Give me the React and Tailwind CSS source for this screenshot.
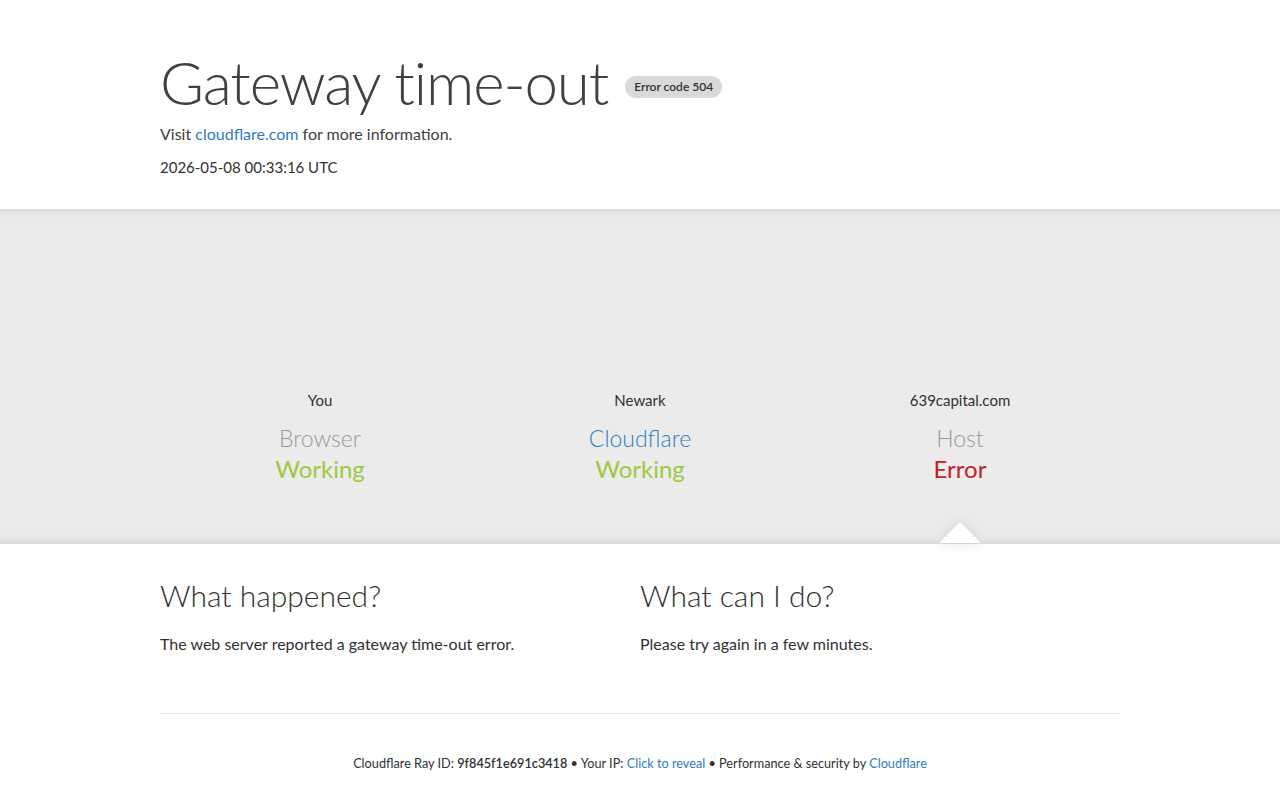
import React from 'react';

const font = { fontFamily: '"Lato", "Liberation Sans", sans-serif' };

const Node = ({ place, name, nameClass, status, statusClass, arrow }) => (
    <div className="relative flex flex-col items-center">
        <span className="text-[15px] leading-[22px] text-[#313131]">{place}</span>
        <span className={`mt-[12px] text-[23px] leading-[30px] font-light ${nameClass}`}>{name}</span>
        <span className={`mt-[1px] text-[24px] leading-[30px] ${statusClass}`}>{status}</span>
        {arrow && (
            <div className="absolute left-1/2 top-[133px] -translate-x-1/2 drop-shadow-[0_0_6px_rgba(0,0,0,0.12)]">
                <div className="h-0 w-0 border-x-[21px] border-b-[21px] border-x-transparent border-b-white" />
            </div>
        )}
    </div>
);

export default function App() {
    return (
        <div className="min-h-[800px] bg-white text-[#404040]" style={font}>
            {/* header */}
            <header className="mx-auto w-[960px] pt-[46px] pb-[31px]">
                <div className="flex items-center">
                    <h1 className="text-[60px] leading-[72px] font-light tracking-[-1.1px] text-[#404040]">Gateway time-out</h1>
                    <span className="ml-[17px] mt-[10px] rounded-full bg-[#d9d9d9] px-[9px] text-[12px] leading-[22px] font-semibold text-[#313131]">
                        Error code 504
                    </span>
                </div>
                <p className="mt-[5px] text-[16px] leading-[22px]">
                    Visit <a className="text-[#2f7bbf]">cloudflare.com</a> for more information.
                </p>
                <p className="mt-[11px] text-[15px] leading-[22px] text-[#313131]">2026-05-08 00:33:16 UTC</p>
            </header>

            {/* status band */}
            <section className="h-[335px] bg-[#ebebeb] shadow-[inset_0_10px_8px_-8px_rgba(0,0,0,0.1),inset_0_-10px_8px_-8px_rgba(0,0,0,0.1)]">
                <div className="mx-auto grid w-[960px] grid-cols-3 pt-[180px]">
                    <Node place="You" name="Browser" nameClass="text-[#999]" status="Working" statusClass="text-[#9bca3e]" />
                    <Node place="Newark" name="Cloudflare" nameClass="text-[#2f7bbf]" status="Working" statusClass="text-[#9bca3e]" />
                    <Node place="639capital.com" name="Host" nameClass="text-[#999]" status="Error" statusClass="text-[#bd2426]" arrow />
                </div>
            </section>

            {/* explanation */}
            <section className="mx-auto w-[960px] pt-[33px]">
                <div className="grid grid-cols-2">
                    <div>
                        <h2 className="text-[30px] leading-[36px] font-light text-[#313131]">What happened?</h2>
                        <p className="mt-[20px] text-[16px] leading-[22px] text-[#313131]">The web server reported a gateway time-out error.</p>
                    </div>
                    <div>
                        <h2 className="text-[30px] leading-[36px] font-light text-[#313131]">What can I do?</h2>
                        <p className="mt-[20px] text-[16px] leading-[22px] text-[#313131]">Please try again in a few minutes.</p>
                    </div>
                </div>
                <div className="mt-[58px] border-t border-[#e6e6e6]" />
                <footer className="pt-[39px] text-center text-[12.7px] leading-[20px] text-[#313131]">
                    Cloudflare Ray ID: <strong className="font-semibold">9f845f1e691c3418</strong>
                    {' • '}Your IP: <a className="text-[#2f7bbf]">Click to reveal</a>
                    {' • '}Performance &amp; security by <a className="text-[#2f7bbf]">Cloudflare</a>
                </footer>
            </section>
        </div>
    );
}
